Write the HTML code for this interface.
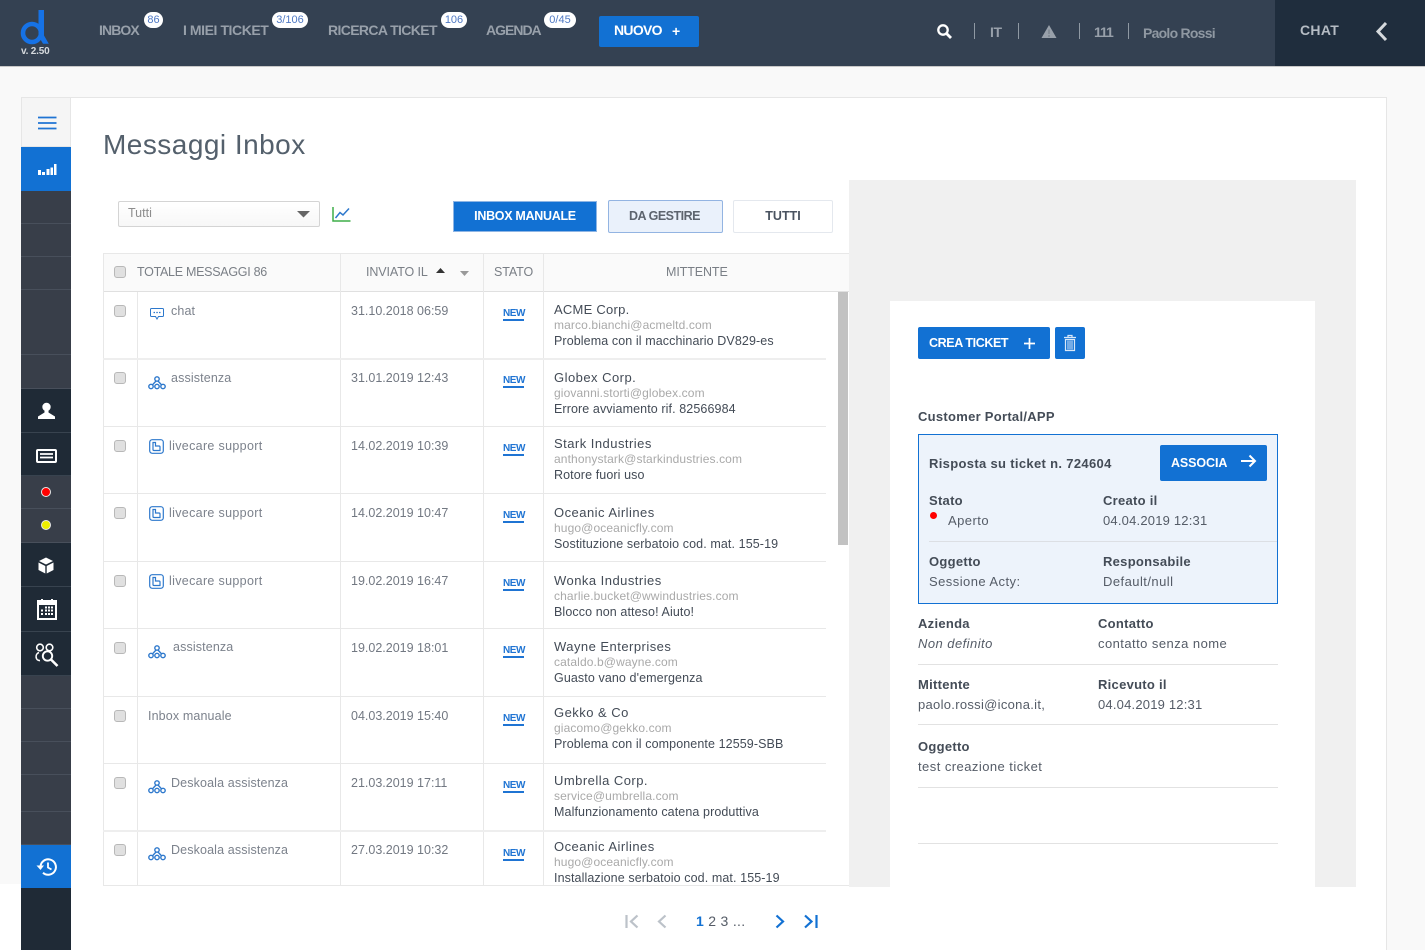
<!DOCTYPE html>
<html lang="it"><head><meta charset="utf-8"><title>Messaggi Inbox</title>
<style>
html,body{margin:0;padding:0;height:950px;overflow:hidden}
body{width:1425px;position:relative;background:#fff;font-family:"Liberation Sans",sans-serif;color:#4a5360;font-size:12.5px}
.a,.t{position:absolute}
.t{white-space:nowrap;line-height:16px}
.nav{color:#98a0aa;font-weight:bold;font-size:14px;top:22px;letter-spacing:-.35px}
.bd{position:absolute;background:#fff;color:#4f79c4;border-radius:9px;height:16px;top:12px;font-size:11px;line-height:16px;text-align:center}
.sep{position:absolute;width:1px;background:#8f99a3;top:23px;height:16px}
.s{position:absolute;left:21px;width:50px;border-bottom:1px solid #484f5b;background:#383e49;box-sizing:border-box}
.k{background:#1f2a36;border-bottom:1px solid #38434f}
.l{position:absolute;background:#e8e8e8}
.cb{position:absolute;left:114px;background:#e0e0e0;border:1px solid #b8b8b8;border-radius:3px;width:10px;height:10px}
.c1{color:#7c828c;font-size:12.5px;letter-spacing:.13px}
.lc{letter-spacing:.33px}
.dt{left:351px;color:#727882;font-size:12.5px}
.nw{left:503px;color:#1f74d3;font-size:10px;font-weight:bold;border-bottom:2px solid #1f74d3;line-height:11px;padding-top:1px;width:21px;text-align:center;letter-spacing:-.45px;margin-top:0}
.m1{left:554px;font-size:13px;color:#434b56;letter-spacing:.47px;margin-top:1px}
.m2{left:554px;font-size:12px;color:#a9a9a9;letter-spacing:.12px}
.m3{left:554px;font-size:12.5px;color:#434b56;letter-spacing:.1px}
.b{font-weight:bold;color:#444c57;font-size:13px;letter-spacing:.28px;margin-top:1px}
.v{color:#555c67;font-size:13px;letter-spacing:.45px;margin-top:1px}
.d{letter-spacing:.2px}
.hd{color:#7a7f86;font-size:12.5px;top:264px;letter-spacing:-.1px}
svg{position:absolute;overflow:visible}
</style></head><body>

<div class="a" style="left:0;top:67px;width:1425px;height:817px;background:#f9f9f9"></div>
<div class="a" style="left:1387px;top:67px;width:38px;height:883px;background:#f9f9f9"></div>
<div class="a" style="left:0;top:0;width:1425px;height:66px;background:#344152;border-bottom:1px solid #c8c8c8"></div>
<div class="a" style="left:1275px;top:0;width:150px;height:66px;background:#1f2d3d"></div>

<svg style="left:0;top:0" width="60" height="50" viewBox="0 0 60 50"><circle cx="32" cy="33" r="9" fill="none" stroke="#1672e6" stroke-width="4.600"/><path d="M38.500 10H44V35.500L48.800 43.800H43L38.500 36Z" fill="#1672e6"/></svg>
<div class="t" style="left:21px;top:44px;font-size:10px;color:#d5d9dd;font-weight:bold;letter-spacing:-.2px">v. 2.50</div>

<div class="t nav" style="left:99px;letter-spacing:-.9px">INBOX</div><div class="bd" style="left:144px;width:19px">86</div>
<div class="t nav" style="left:183px;letter-spacing:-.43px">I MIEI TICKET</div><div class="bd" style="left:272px;width:36px">3/106</div>
<div class="t nav" style="left:328px;letter-spacing:-.63px">RICERCA TICKET</div><div class="bd" style="left:441px;width:26px">106</div>
<div class="t nav" style="left:486px;letter-spacing:-1px">AGENDA</div><div class="bd" style="left:544px;width:32px">0/45</div>
<div class="a" style="left:599px;top:16px;width:100px;height:31px;background:#1271d3;border-radius:2px"></div>
<div class="t" style="left:614px;top:22px;color:#fff;font-weight:bold;font-size:14px;letter-spacing:-.7px">NUOVO</div>
<div class="t" style="left:672px;top:23px;color:#fff;font-weight:bold;font-size:14px">+</div>

<svg style="left:936px;top:23px" width="18" height="18" viewBox="0 0 18 18"><circle cx="7" cy="7" r="4.700" fill="none" stroke="#fff" stroke-width="2.300"/><path d="M10.500 10.500L15 15" stroke="#fff" stroke-width="2.800"/></svg>
<div class="sep" style="left:974px"></div>
<div class="t nav" style="left:990px;top:24px;font-weight:bold;font-size:14px">IT</div>
<div class="sep" style="left:1018px"></div>
<svg style="left:1041px;top:24px" width="16" height="15" viewBox="0 0 16 15"><path d="M8 1L15.500 14H.5Z" fill="#98a0aa"/><path d="M8 5.500V10M8 11V13" stroke="#6e7782" stroke-width="1"/></svg>
<div class="sep" style="left:1079px"></div>
<div class="t" style="left:1094px;top:24px;color:#98a0aa;font-size:14px;font-weight:bold;letter-spacing:-1px">111</div>
<div class="sep" style="left:1128px"></div>
<div class="t" style="left:1143px;top:25px;color:#8f98a2;font-size:14px;font-weight:bold;letter-spacing:-.75px">Paolo Rossi</div>
<div class="t" style="left:1300px;top:22px;color:#b5bcc4;font-size:14px;font-weight:bold;letter-spacing:.3px">CHAT</div>
<svg style="left:1374px;top:21px" width="16" height="20" viewBox="0 0 16 20"><path d="M12 2L4 10.500L12 19" fill="none" stroke="#d5d9dd" stroke-width="3"/></svg>

<!-- card -->
<div class="a" style="left:21px;top:97px;width:1366px;height:853px;background:#fff;border:1px solid #e6e6e6;border-bottom:0;box-sizing:border-box"></div>

<!-- sidebar -->
<div class="a" style="left:21px;top:97px;width:50px;height:50px;background:#f5f5f5;border:1px solid #e6e6e6;box-sizing:border-box"></div>
<svg style="left:38px;top:116px" width="19" height="14"><path d="M0 1.500H18.500M0 7H18.500M0 12.500H18.500" stroke="#1f74d3" stroke-width="1.700"/></svg>
<div class="a" style="left:21px;top:147px;width:50px;height:44px;background:#1271d3"></div>
<svg style="left:37px;top:163px" width="20" height="14"><path d="M1 7h3v5H1zM5 9h3v3H5zM9.500 6h3v6h-3zM13.500 4.500h2.500v7.500h-2.500zM17 1h2.500v11H17z" fill="#fff"/></svg>
<div class="s" style="top:191px;height:33px"></div>
<div class="s" style="top:224px;height:33px"></div>
<div class="s" style="top:257px;height:33px"></div>
<div class="s" style="top:290px;height:65px"></div>
<div class="s" style="top:355px;height:34px"></div>
<div class="s k" style="top:389px;height:44px"></div>
<div class="s k" style="top:433px;height:43px"></div>
<div class="s" style="top:476px;height:33px"></div>
<div class="s" style="top:509px;height:34px"></div>
<div class="s k" style="top:543px;height:44px"></div>
<div class="s k" style="top:587px;height:45px"></div>
<div class="s k" style="top:632px;height:44px"></div>
<div class="s" style="top:676px;height:33px"></div>
<div class="s" style="top:709px;height:33px"></div>
<div class="s" style="top:742px;height:33px"></div>
<div class="s" style="top:775px;height:37px"></div>
<div class="s" style="top:812px;height:33px"></div>
<div class="a" style="left:21px;top:845px;width:50px;height:43px;background:#1271d3"></div>
<div class="a" style="left:21px;top:888px;width:50px;height:62px;background:#1f2a36"></div>

<svg style="left:37px;top:402px" width="19" height="18" viewBox="0 0 19 18"><circle cx="9.500" cy="5" r="4.200" fill="#fff"/><path d="M7.500 8V10.500L1 14.500V17H18V14.500L11.500 10.500V8Z" fill="#fff"/></svg>
<svg style="left:36px;top:449px" width="21" height="14" viewBox="0 0 21 14"><rect x="1" y="1" width="19" height="12" rx="1" fill="none" stroke="#fff" stroke-width="2"/><path d="M4 5H17M4 8.500H17" stroke="#fff" stroke-width="1.800"/></svg>
<div class="a" style="left:41px;top:487px;width:10px;height:10px;background:#f00;border-radius:50%;border:1px solid #e8e8e8;box-sizing:border-box"></div>
<div class="a" style="left:41px;top:520px;width:10px;height:10px;background:#ee0;border-radius:50%;border:1px solid #e8e8e8;box-sizing:border-box"></div>
<svg style="left:38px;top:557px" width="16" height="17" viewBox="0 0 16 17"><path d="M8 .5L15 4L8 7.500L1 4ZM.5 5.500L7.300 9V16.500L.5 13ZM15.500 5.500L8.700 9V16.500L15.500 13Z" fill="#fff"/></svg>
<svg style="left:37px;top:599px" width="20" height="21" viewBox="0 0 20 21"><path d="M0 1H4V0H6V1H14V0H16V1H20V21H0Z" fill="#fff"/><path d="M2 6H18V19H2Z" fill="#1f2a36"/><path d="M8 7.500h2v2H8zM11 7.500h2v2h-2zM14 7.500h2v2h-2zM4 10.500h2v2H4zM8 10.500h2v2H8zM11 10.500h2v2h-2zM14 10.500h2v2h-2zM4 14h2v2H4zM8 14h2v2H8zM11 14h2v2h-2zM14 14h2v2h-2z" fill="#fff"/></svg>
<svg style="left:35px;top:643px" width="24" height="24" viewBox="0 0 24 24" fill="none" stroke="#fff"><circle cx="5" cy="4.500" r="3.300" stroke-width="1.600"/><circle cx="14.500" cy="4.500" r="3.300" stroke-width="1.600"/><path d="M4 9.500C-.5 11 .5 18 5 17.500" stroke-width="1.600"/><circle cx="12.500" cy="13" r="4.700" stroke-width="1.900"/><path d="M16 16.500L22.500 23" stroke-width="2.600"/></svg>
<svg style="left:36px;top:857px" width="21" height="20" viewBox="0 0 21 20" fill="none" stroke="#fff"><path d="M4.500 10A7.700 7.700 0 1 1 7 15.700" stroke-width="2"/><path d="M.5 8.500H8L4.500 13Z" fill="#fff" stroke="none"/><path d="M12 5.500V10.500L15.500 12.500" stroke-width="1.800"/></svg>

<div class="t" style="left:103px;top:128px;font-size:28px;line-height:34px;color:#54606c;letter-spacing:.47px">Messaggi Inbox</div>

<!-- filters -->
<div class="a" style="left:118px;top:201px;width:202px;height:26px;border:1px solid #d4d4d4;border-radius:2px;box-sizing:border-box;background:linear-gradient(#fff,#f7f7f7)"></div>
<div class="t" style="left:128px;top:205px;color:#8d8d8d;font-size:12.500px">Tutti</div>
<svg style="left:297px;top:211px" width="13" height="7"><path d="M0 0H13L6.500 6.500Z" fill="#666"/></svg>
<svg style="left:332px;top:207px" width="19" height="15" viewBox="0 0 19 15" fill="none"><path d="M1 0V14H18.500" stroke="#3fae49" stroke-width="1.500"/><path d="M3.500 11L8 5.500L11 8L17 1.500" stroke="#2d78cc" stroke-width="1.500"/></svg>
<div class="a" style="left:453px;top:201px;width:144px;height:31px;background:#1271d3;border:1px solid #8eb5e4;box-sizing:border-box;color:#fff;font-weight:bold;font-size:12.500px;text-align:center;line-height:29px;letter-spacing:-.3px">INBOX MANUALE</div>
<div class="a" style="left:608px;top:200px;width:115px;height:33px;background:#eaf1fb;border:1px solid #93b4e2;border-radius:2px;box-sizing:border-box;color:#5d646e;font-weight:bold;font-size:12.500px;text-align:center;line-height:31px;letter-spacing:-.5px;text-indent:-2px">DA GESTIRE</div>
<div class="a" style="left:733px;top:200px;width:100px;height:33px;background:#fff;border:1px solid #e4e8ee;border-radius:2px;box-sizing:border-box;color:#4a5360;font-weight:bold;font-size:12.500px;text-align:center;line-height:31px">TUTTI</div>

<!-- table -->
<div class="a" style="left:103px;top:253px;width:746px;height:39px;background:#fafafa;border-top:1px solid #e8e8e8;border-bottom:1px solid #e0e0e0;box-sizing:border-box"></div>
<div class="l" style="left:103px;top:253px;width:1px;height:633px"></div>
<div class="l" style="left:137px;top:292px;width:1px;height:594px"></div>
<div class="l" style="left:340px;top:253px;width:1px;height:633px"></div>
<div class="l" style="left:483px;top:253px;width:1px;height:633px"></div>
<div class="l" style="left:543px;top:253px;width:1px;height:633px"></div>
<div class="l" style="left:103px;top:358px;width:723px;height:2px;background:#eee"></div>
<div class="l" style="left:103px;top:426px;width:723px;height:1px"></div>
<div class="l" style="left:103px;top:493px;width:723px;height:1px"></div>
<div class="l" style="left:103px;top:561px;width:723px;height:1px"></div>
<div class="l" style="left:103px;top:628px;width:723px;height:1px"></div>
<div class="l" style="left:103px;top:696px;width:723px;height:1px"></div>
<div class="l" style="left:103px;top:763px;width:723px;height:1px"></div>
<div class="l" style="left:103px;top:830px;width:723px;height:2px;background:#eee"></div>
<div class="l" style="left:103px;top:885px;width:746px;height:1px"></div>
<div class="a" style="left:838px;top:292px;width:10px;height:253px;background:#c2c2c2"></div>

<div class="cb" style="top:266px"></div>
<div class="t hd" style="left:137px;letter-spacing:-.28px">TOTALE MESSAGGI 86</div>
<div class="t hd" style="left:366px">INVIATO IL</div>
<svg style="left:436px;top:268px" width="10" height="6"><path d="M0 5L4.500 0L9 5Z" fill="#333"/></svg>
<svg style="left:460px;top:271px" width="10" height="6"><path d="M0 0H9L4.500 5Z" fill="#999"/></svg>
<div class="t hd" style="left:494px">STATO</div>
<div class="t hd" style="left:666px">MITTENTE</div>

<!-- row 1 -->
<div class="cb" style="top:305px"></div>
<svg style="left:149px;top:307px" width="16" height="14" viewBox="0 0 16 14" fill="none" stroke="#2d78cc"><path d="M2.500 1.500H13.500Q14.500 1.500 14.500 2.500V8.500Q14.500 9.500 13.500 9.500H9.500L8 12L6.500 9.500H2.500Q1.500 9.500 1.500 8.500V2.500Q1.500 1.500 2.500 1.500Z"/><path d="M4.500 5.500H6M7.300 5.500H8.800M10 5.500H11.500" stroke-width="1.300"/></svg>
<div class="t c1" style="left:171px;top:303px">chat</div>
<div class="t dt" style="top:303px">31.10.2018 06:59</div>
<div class="t nw" style="top:307px">NEW</div>
<div class="t m1" style="top:301px;letter-spacing:.25px">ACME Corp.</div>
<div class="t m2" style="top:317px">marco.bianchi@acmeltd.com</div>
<div class="t m3" style="top:333px">Problema con il macchinario DV829-es</div>

<!-- row 2 -->
<div class="cb" style="top:372px"></div>
<svg style="left:148px;top:376px" width="18" height="14" viewBox="0 0 18 14" fill="none" stroke="#2d78cc" stroke-width="1.400"><circle cx="9" cy="3" r="2.200"/><circle cx="3" cy="10.500" r="2.200"/><circle cx="9" cy="10.500" r="2.200"/><circle cx="15" cy="10.500" r="2.200"/><path d="M8 5L4.500 8.800M10 5L13.500 8.800"/></svg>
<div class="t c1" style="left:171px;top:370px">assistenza</div>
<div class="t dt" style="top:370px">31.01.2019 12:43</div>
<div class="t nw" style="top:374px">NEW</div>
<div class="t m1" style="top:369px">Globex Corp.</div>
<div class="t m2" style="top:385px">giovanni.storti@globex.com</div>
<div class="t m3" style="top:401px">Errore avviamento rif. 82566984</div>

<!-- row 3 -->
<div class="cb" style="top:440px"></div>
<svg style="left:149px;top:439px" width="15" height="15" viewBox="0 0 15 15" fill="none" stroke="#2d78cc" stroke-width="1.200"><rect x=".7" y=".7" width="13.600" height="13.600" rx="2.500"/><path d="M4 3.500V10.500Q4 11.500 5 11.500H11V8Q11 7 10 7H6.500V3.500Z"/></svg>
<div class="t c1 lc" style="left:169px;top:438px">livecare support</div>
<div class="t dt" style="top:438px">14.02.2019 10:39</div>
<div class="t nw" style="top:442px">NEW</div>
<div class="t m1" style="top:435px">Stark Industries</div>
<div class="t m2" style="top:451px">anthonystark@starkindustries.com</div>
<div class="t m3" style="top:467px">Rotore fuori uso</div>

<!-- row 4 -->
<div class="cb" style="top:507px"></div>
<svg style="left:149px;top:506px" width="15" height="15" viewBox="0 0 15 15" fill="none" stroke="#2d78cc" stroke-width="1.200"><rect x=".7" y=".7" width="13.600" height="13.600" rx="2.500"/><path d="M4 3.500V10.500Q4 11.500 5 11.500H11V8Q11 7 10 7H6.500V3.500Z"/></svg>
<div class="t c1 lc" style="left:169px;top:505px">livecare support</div>
<div class="t dt" style="top:505px">14.02.2019 10:47</div>
<div class="t nw" style="top:509px">NEW</div>
<div class="t m1" style="top:504px">Oceanic Airlines</div>
<div class="t m2" style="top:520px">hugo@oceanicfly.com</div>
<div class="t m3" style="top:536px">Sostituzione serbatoio cod. mat. 155-19</div>

<!-- row 5 -->
<div class="cb" style="top:575px"></div>
<svg style="left:149px;top:574px" width="15" height="15" viewBox="0 0 15 15" fill="none" stroke="#2d78cc" stroke-width="1.200"><rect x=".7" y=".7" width="13.600" height="13.600" rx="2.500"/><path d="M4 3.500V10.500Q4 11.500 5 11.500H11V8Q11 7 10 7H6.500V3.500Z"/></svg>
<div class="t c1 lc" style="left:169px;top:573px">livecare support</div>
<div class="t dt" style="top:573px">19.02.2019 16:47</div>
<div class="t nw" style="top:577px">NEW</div>
<div class="t m1" style="top:572px">Wonka Industries</div>
<div class="t m2" style="top:588px">charlie.bucket@wwindustries.com</div>
<div class="t m3" style="top:604px">Blocco non atteso! Aiuto!</div>

<!-- row 6 -->
<div class="cb" style="top:642px"></div>
<svg style="left:148px;top:645px" width="18" height="14" viewBox="0 0 18 14" fill="none" stroke="#2d78cc" stroke-width="1.400"><circle cx="9" cy="3" r="2.200"/><circle cx="3" cy="10.500" r="2.200"/><circle cx="9" cy="10.500" r="2.200"/><circle cx="15" cy="10.500" r="2.200"/><path d="M8 5L4.500 8.800M10 5L13.500 8.800"/></svg>
<div class="t c1" style="left:173px;top:639px">assistenza</div>
<div class="t dt" style="top:640px">19.02.2019 18:01</div>
<div class="t nw" style="top:644px">NEW</div>
<div class="t m1" style="top:638px">Wayne Enterprises</div>
<div class="t m2" style="top:654px">cataldo.b@wayne.com</div>
<div class="t m3" style="top:670px">Guasto vano d'emergenza</div>

<!-- row 7 -->
<div class="cb" style="top:710px"></div>
<div class="t c1" style="left:148px;top:708px">Inbox manuale</div>
<div class="t dt" style="top:708px">04.03.2019 15:40</div>
<div class="t nw" style="top:712px">NEW</div>
<div class="t m1" style="top:704px">Gekko &amp; Co</div>
<div class="t m2" style="top:720px">giacomo@gekko.com</div>
<div class="t m3" style="top:736px">Problema con il componente 12559-SBB</div>

<!-- row 8 -->
<div class="cb" style="top:777px"></div>
<svg style="left:148px;top:780px" width="18" height="14" viewBox="0 0 18 14" fill="none" stroke="#2d78cc" stroke-width="1.400"><circle cx="9" cy="3" r="2.200"/><circle cx="3" cy="10.500" r="2.200"/><circle cx="9" cy="10.500" r="2.200"/><circle cx="15" cy="10.500" r="2.200"/><path d="M8 5L4.500 8.800M10 5L13.500 8.800"/></svg>
<div class="t c1" style="left:171px;top:775px">Deskoala assistenza</div>
<div class="t dt" style="top:775px">21.03.2019 17:11</div>
<div class="t nw" style="top:779px">NEW</div>
<div class="t m1" style="top:772px">Umbrella Corp.</div>
<div class="t m2" style="top:788px">service@umbrella.com</div>
<div class="t m3" style="top:804px">Malfunzionamento catena produttiva</div>

<!-- row 9 -->
<div class="cb" style="top:844px"></div>
<svg style="left:148px;top:847px" width="18" height="14" viewBox="0 0 18 14" fill="none" stroke="#2d78cc" stroke-width="1.400"><circle cx="9" cy="3" r="2.200"/><circle cx="3" cy="10.500" r="2.200"/><circle cx="9" cy="10.500" r="2.200"/><circle cx="15" cy="10.500" r="2.200"/><path d="M8 5L4.500 8.800M10 5L13.500 8.800"/></svg>
<div class="t c1" style="left:171px;top:842px">Deskoala assistenza</div>
<div class="t dt" style="top:842px">27.03.2019 10:32</div>
<div class="t nw" style="top:847px">NEW</div>
<div class="t m1" style="top:838px">Oceanic Airlines</div>
<div class="t m2" style="top:854px">hugo@oceanicfly.com</div>
<div class="t m3" style="top:870px">Installazione serbatoio cod. mat. 155-19</div>

<!-- pagination -->
<svg style="left:625px;top:914px" width="16" height="15" fill="none" stroke="#bcc2c9" stroke-width="2.200"><path d="M1.500 1V14M12.500 1.500L6 7.500L12.500 13.500"/></svg>
<svg style="left:656px;top:914px" width="12" height="15" fill="none" stroke="#bcc2c9" stroke-width="2.200"><path d="M9.500 1.500L3 7.500L9.500 13.500"/></svg>
<div class="t" style="left:696px;top:913px;font-size:14px;color:#555c67;letter-spacing:.3px"><b style="color:#1271d3">1</b> 2 3 ...</div>
<svg style="left:774px;top:914px" width="12" height="15" fill="none" stroke="#1271d3" stroke-width="2.200"><path d="M2.500 1.500L9 7.500L2.500 13.500"/></svg>
<svg style="left:804px;top:914px" width="16" height="15" fill="none" stroke="#1271d3" stroke-width="2.200"><path d="M1 1.500L7.500 7.500L1 13.500M12.500 1V14"/></svg>

<!-- right panel -->
<div class="a" style="left:849px;top:180px;width:507px;height:707px;background:#f0f0f0"></div>
<div class="a" style="left:890px;top:301px;width:425px;height:586px;background:#fff"></div>
<div class="a" style="left:918px;top:327px;width:132px;height:32px;background:#1271d3;border-radius:2px"></div>
<div class="t" style="left:929px;top:335px;color:#fff;font-weight:bold;font-size:12.500px;letter-spacing:-.4px">CREA TICKET</div>
<svg style="left:1023px;top:337px" width="13" height="13"><path d="M6.500 1V12M1 6.500H12" stroke="#fff" stroke-width="1.700"/></svg>
<div class="a" style="left:1055px;top:327px;width:30px;height:32px;background:#1271d3;border-radius:2px"></div>
<svg style="left:1064px;top:335px" width="12" height="16" viewBox="0 0 12 16" fill="none" stroke="#dbe8f8"><path d="M0 2.500H12M4 2.500V.5H8V2.500" stroke-width="1.200"/><path d="M1.500 4.500H10.500V15.500H1.500Z" stroke-width="1.200"/><path d="M4 5.500V14.500M6 5.500V14.500M8 5.500V14.500" stroke-width="1"/></svg>
<div class="t b" style="left:918px;top:408px">Customer Portal/APP</div>

<div class="a" style="left:918px;top:434px;width:360px;height:170px;background:#edf3fb;border:1px solid #1271d3;box-sizing:border-box"></div>
<div class="t b" style="left:929px;top:455px;letter-spacing:.33px">Risposta su ticket n. 724604</div>
<div class="a" style="left:1160px;top:445px;width:107px;height:36px;background:#1271d3;border-radius:2px"></div>
<div class="t" style="left:1171px;top:455px;color:#fff;font-weight:bold;font-size:12.500px;letter-spacing:-.1px">ASSOCIA</div>
<svg style="left:1240px;top:454px" width="17" height="14" fill="none" stroke="#fff" stroke-width="2"><path d="M1 7H15M9.500 1.500L15 7L9.500 12.500"/></svg>
<div class="t b" style="left:929px;top:492px">Stato</div>
<div class="a" style="left:930px;top:512px;width:7px;height:7px;background:#f00;border-radius:50%"></div>
<div class="t v" style="left:948px;top:512px">Aperto</div>
<div class="t b" style="left:1103px;top:492px">Creato il</div>
<div class="t v d" style="left:1103px;top:512px">04.04.2019 12:31</div>
<div class="a" style="left:929px;top:541px;width:348px;height:1px;background:#dcdfe4"></div>
<div class="t b" style="left:929px;top:553px">Oggetto</div>
<div class="t v" style="left:929px;top:573px">Sessione Acty:</div>
<div class="t b" style="left:1103px;top:553px">Responsabile</div>
<div class="t v" style="left:1103px;top:573px">Default/null</div>

<div class="t b" style="left:918px;top:615px">Azienda</div>
<div class="t v" style="left:918px;top:635px;font-style:italic">Non definito</div>
<div class="t b" style="left:1098px;top:615px">Contatto</div>
<div class="t v" style="left:1098px;top:635px">contatto senza nome</div>
<div class="l" style="left:918px;top:664px;width:360px;height:1px;background:#e2e2e2"></div>
<div class="t b" style="left:918px;top:676px">Mittente</div>
<div class="t v" style="left:918px;top:696px;letter-spacing:.3px">paolo.rossi@icona.it,</div>
<div class="t b" style="left:1098px;top:676px">Ricevuto il</div>
<div class="t v d" style="left:1098px;top:696px">04.04.2019 12:31</div>
<div class="l" style="left:918px;top:724px;width:360px;height:1px;background:#e2e2e2"></div>
<div class="t b" style="left:918px;top:738px">Oggetto</div>
<div class="t v" style="left:918px;top:758px">test creazione ticket</div>
<div class="l" style="left:918px;top:787px;width:360px;height:1px;background:#e2e2e2"></div>
<div class="l" style="left:918px;top:843px;width:360px;height:1px;background:#e2e2e2"></div>
</body></html>
